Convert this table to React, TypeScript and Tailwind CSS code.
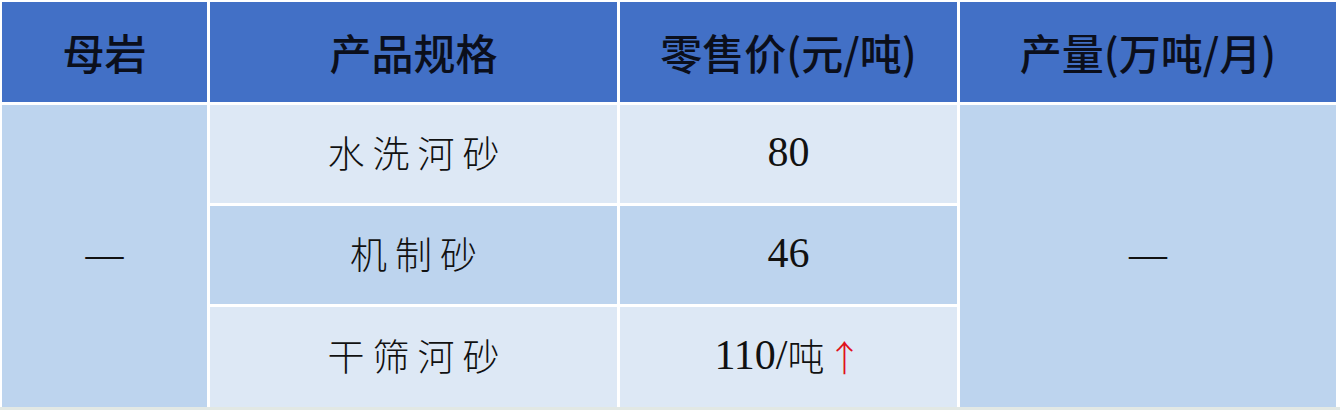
import React from "react";

export default function App() {
  const cjk = "font-['Noto_Sans_CJK_SC',sans-serif]";
  const serif = "font-['Liberation_Serif','Noto_Sans_CJK_SC',serif]";
  const light = "bg-[#dde8f5]";
  const mid = "bg-[#bdd4ee]";
  const head = `bg-[#4270c6] flex items-center justify-center text-[42px] font-medium text-[#0b0f1c] pb-[2px] ${cjk}`;
  const body = "flex items-center justify-center text-[#111] pb-[3px]";
  const zh = `text-[37px] font-light tracking-[8px] pl-[8px] ${cjk}`;
  const num = `text-[42px] ${serif}`;
  const dash = `text-[38px] ${serif}`;
  return (
    <div className="w-[1340px] h-[410px] bg-white relative overflow-hidden">
      <div className="pt-[2px] pl-[2px]">
        <div className="grid grid-cols-[205px_407px_337px_376px] grid-rows-[100px_98px_98px_100px] gap-[3px]">
          <div className={head}>母岩</div>
          <div className={head}>产品规格</div>
          <div className={head}>零售价(元/吨)</div>
          <div className={head}>产量(万吨/月)</div>

          <div className={`${mid} ${body} row-span-3 ${dash}`}>—</div>
          <div className={`${light} ${body} ${zh}`}>水洗河砂</div>
          <div className={`${light} ${body} ${num}`}>80</div>
          <div className={`${mid} ${body} row-span-3 ${dash}`}>—</div>

          <div className={`${mid} ${body} ${zh}`}>机制砂</div>
          <div className={`${mid} ${body} ${num}`}>46</div>

          <div className={`${light} ${body} ${zh}`}>干筛河砂</div>
          <div className={`${light} ${body} ${num}`}>
            <span>110/</span>
            <span className={`text-[37px] font-light ${cjk}`}>吨</span>
            <span className={`text-[36px] text-[#e0101c] font-light ml-[2px] ${cjk}`}>↑</span>
          </div>
        </div>
      </div>
      <div className="absolute left-0 right-0 bottom-0 h-[3px] bg-[#e2e8e4]" />
    </div>
  );
}
